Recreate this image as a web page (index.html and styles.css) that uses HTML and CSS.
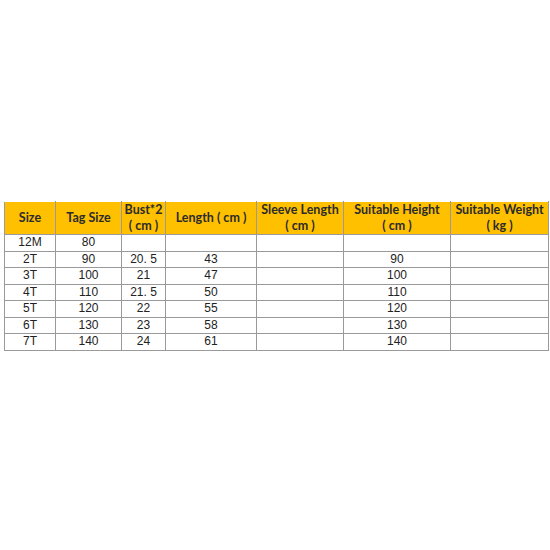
FILE: index.html
```html
<!DOCTYPE html>
<html>
<head>
<meta charset="utf-8">
<link rel="stylesheet" href="styles.css">
</head>
<body>
<div class="page">
<table class="size-table">
  <colgroup>
    <col class="c1"><col class="c2"><col class="c3"><col class="c4"><col class="c5"><col class="c6"><col class="c7">
  </colgroup>
  <thead>
    <tr>
      <th>Size</th>
      <th>Tag Size</th>
      <th>Bust*2<br>( cm )</th>
      <th>Length ( cm )</th>
      <th>Sleeve Length<br>( cm )</th>
      <th>Suitable Height<br>( cm )</th>
      <th>Suitable Weight<br>( kg )</th>
    </tr>
  </thead>
  <tbody>
    <tr><td>12M</td><td>80</td><td></td><td></td><td></td><td></td><td></td></tr>
    <tr><td>2T</td><td>90</td><td>20. 5</td><td>43</td><td></td><td>90</td><td></td></tr>
    <tr><td>3T</td><td>100</td><td>21</td><td>47</td><td></td><td>100</td><td></td></tr>
    <tr><td>4T</td><td>110</td><td>21. 5</td><td>50</td><td></td><td>110</td><td></td></tr>
    <tr><td>5T</td><td>120</td><td>22</td><td>55</td><td></td><td>120</td><td></td></tr>
    <tr><td>6T</td><td>130</td><td>23</td><td>58</td><td></td><td>130</td><td></td></tr>
    <tr><td>7T</td><td>140</td><td>24</td><td>61</td><td></td><td>140</td><td></td></tr>
  </tbody>
</table>
</div>
</body>
</html>
```
FILE: styles.css
```css
html, body {
  margin: 0;
  padding: 0;
  background: #ffffff;
}
.page {
  width: 550px;
  height: 550px;
  padding-top: 201px;
  padding-left: 4px;
  box-sizing: border-box;
}
.size-table {
  border-collapse: collapse;
  table-layout: fixed;
  width: 544px;
  color: #1a1a1a;
}
.c1 { width: 51px; }
.c2 { width: 66px; }
.c3 { width: 44px; }
.c4 { width: 91px; }
.c5 { width: 87px; }
.c6 { width: 107px; }
.c7 { width: 98px; }
.size-table th,
.size-table td {
  border: 1px solid #9a9a9a;
  padding: 0;
  text-align: center;
  vertical-align: middle;
  overflow: hidden;
  white-space: nowrap;
}
.size-table th {
  background: #ffc000;
  height: 32px;
  font-family: Lato, "Noto Sans CJK SC", sans-serif;
  font-weight: 700;
  font-size: 12.5px;
  line-height: 16px;
  color: #2b2b2b;
}
.size-table thead th {
  border-top-color: #ffffff;
}
.size-table td {
  height: 15.5px;
  font-family: "Liberation Sans", Arial, sans-serif;
  font-size: 12px;
  line-height: 15px;
  color: #222;
}
```
